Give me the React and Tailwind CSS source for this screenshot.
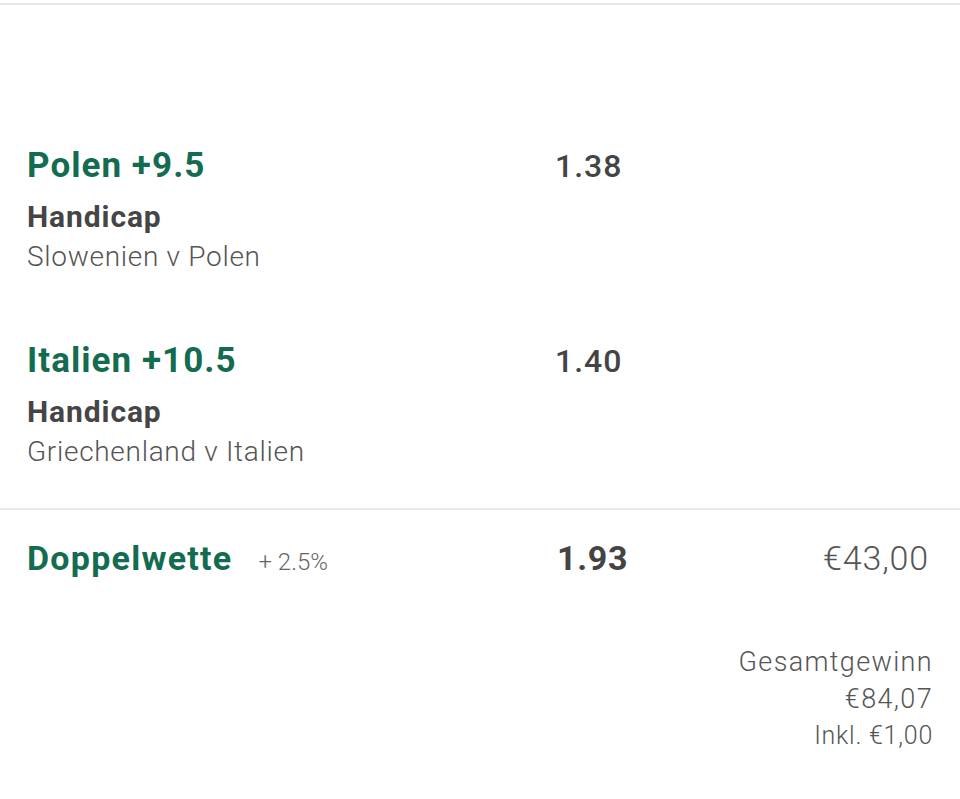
import React from "react";

const legs = [
  { pick: "Polen +9.5", market: "Handicap", event: "Slowenien v Polen", odds: "1.38" },
  { pick: "Italien +10.5", market: "Handicap", event: "Griechenland v Italien", odds: "1.40" },
];

const Leg = ({ leg }) => (
  <div className="flex pl-[27px]">
    <div className="w-[528px]">
      <p className="text-[35px] leading-[44px] font-bold tracking-[0.03em] text-[#146c50]">{leg.pick}</p>
      <p className="mt-[9px] text-[30px] leading-[40px] font-bold tracking-[0.03em] text-[#454545]">{leg.market}</p>
      <p className="text-[28px] leading-[40px] font-light tracking-[0.025em] text-[#555]">{leg.event}</p>
    </div>
    <p className="text-[32px] leading-[44px] font-medium tracking-[0.03em] text-[#444]">{leg.odds}</p>
  </div>
);

export default function App() {
  return (
    <div className="w-[960px] h-[799px] bg-white overflow-hidden font-['Roboto',sans-serif]">
      <div className="mt-[3px] h-[2px] bg-[#e6e6e6]"></div>

      <div className="mt-[139px] flex flex-col gap-[62px]">
        {legs.map((leg) => (
          <Leg key={leg.pick} leg={leg} />
        ))}
      </div>

      <div className="mt-[36px] h-[2px] bg-[#e8e8e8]"></div>

      <div className="mt-[26px] flex items-baseline pl-[27px] pr-[31px]">
        <div className="w-[530px] flex items-baseline gap-[26px]">
          <p className="text-[34px] leading-[44px] font-bold tracking-[0.037em] text-[#146c50]">Doppelwette</p>
          <p className="text-[24px] font-light text-[#666]">+ 2.5%</p>
        </div>
        <p className="text-[34px] leading-[44px] font-bold tracking-[0.02em] text-[#444]">1.93</p>
        <p className="ml-auto text-[34px] leading-[44px] font-light tracking-[0.025em] text-[#555]">€43,00</p>
      </div>

      <div className="mt-[64px] pr-[27px] text-right font-light text-[#555]">
        <p className="text-[27px] leading-[37px] tracking-[0.05em]">Gesamtgewinn</p>
        <p className="text-[27px] leading-[37px] tracking-[0.05em]">€84,07</p>
        <p className="text-[25px] leading-[36px] tracking-[0.03em]">Inkl. €1,00</p>
      </div>
    </div>
  );
}
